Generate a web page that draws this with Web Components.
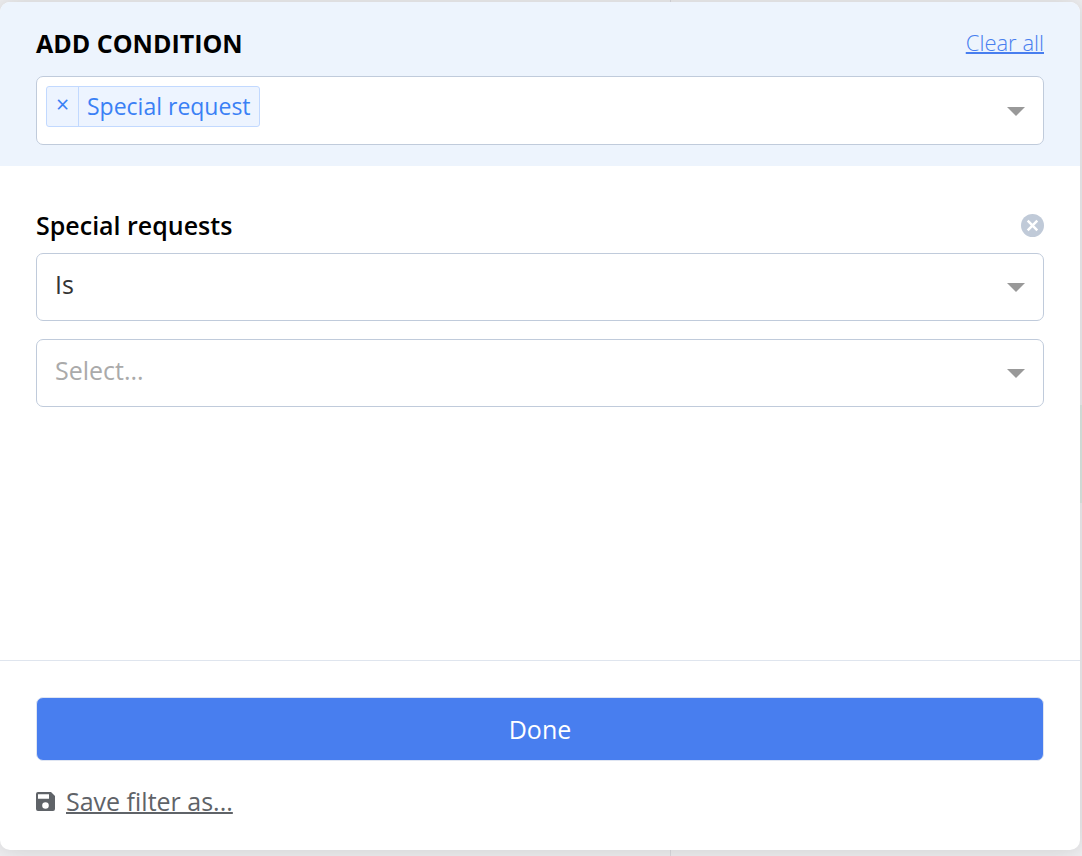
<!DOCTYPE html>
<html lang="en">
<head>
  <meta charset="utf-8">
  <meta name="viewport" content="width=device-width, initial-scale=1">
  <title>Add condition</title>
  <style>
    :root {
      --primary: #487eef;
      --header: #edf4fd;
      --border: #c0cbdb;
      --arrow: #999;
      --gray: #5f6368;
    }
    * {
      box-sizing: border-box;
    }
    body {
      margin: 0;
      min-height: 100vh;
      display: flex;
      padding: 2px 2px 6px 0;
      background:
        linear-gradient(#dcdce0, #dcdce0) 62% 0 / 1px 100% no-repeat,
        linear-gradient(#deebe5, #deebe5) 100% 405px / 2px 98px no-repeat,
        #f0f0f2;
      font-family: "Open Sans", "Noto Sans", sans-serif;
      font-size: 25px;
      line-height: 34px;
      color: #000;
    }
  </style>
</head>
<body>
  <filter-panel>
    <condition-header slot="header" heading="Add condition">
      <tag-picker label="Conditions">
        <filter-tag>Special request</filter-tag>
      </tag-picker>
    </condition-header>
    <condition-group heading="Special requests">
      <select-box label="Operator" value="Is"></select-box>
      <select-box label="Special request" placeholder="Select..."></select-box>
    </condition-group>
    <filter-actions slot="footer"></filter-actions>
  </filter-panel>

  <script>
    class FilterPanel extends HTMLElement {
      constructor() {
        super();
        this.attachShadow({ mode: "open" });
      }

      connectedCallback() {
        this.shadowRoot.innerHTML = `
          <style>
            :host {
              flex: 1;
              display: flex;
              flex-direction: column;
              border-radius: 10px;
              overflow: hidden;
              background: #fff;
              box-shadow: 0 0 24px rgba(0, 0, 0, 0.16);
            }
            main {
              flex: 1;
              padding: 42px 36px;
            }
          </style>
          <slot name="header"></slot>
          <main><slot></slot></main>
          <slot name="footer"></slot>
        `;
      }
    }

    class ConditionHeader extends HTMLElement {
      constructor() {
        super();
        this.attachShadow({ mode: "open" });
      }

      connectedCallback() {
        this.shadowRoot.innerHTML = `
          <style>
            :host {
              display: block;
              padding: 24px 36px 21px;
              background: var(--header);
            }
            .row {
              display: flex;
              justify-content: space-between;
              align-items: flex-start;
              margin-bottom: 16px;
            }
            h1 {
              margin: 0;
              font-size: 25px;
              font-weight: 700;
              text-transform: uppercase;
            }
            a {
              font-size: 22px;
              font-weight: 300;
              line-height: 32px;
              color: var(--primary);
              text-decoration-thickness: 2px;
            }
          </style>
          <div class="row">
            <h1>${this.getAttribute("heading")}</h1>
            <a href="#">Clear all</a>
          </div>
          <slot></slot>
        `;
      }
    }

    class TagPicker extends HTMLElement {
      constructor() {
        super();
        this.attachShadow({ mode: "open" });
      }

      connectedCallback() {
        this.shadowRoot.innerHTML = `
          <style>
            :host {
              box-sizing: border-box;
              display: flex;
              align-items: center;
              gap: 8px;
              padding: 9px 18px 17px 9px;
              border: 1px solid var(--border);
              border-radius: 7px;
              background: #fff;
            }
            input {
              flex: 1;
              min-width: 0;
              height: 34px;
              padding: 0;
              border: 0;
              outline: 0;
              background: none;
              font: inherit;
            }
            svg {
              display: block;
              width: 18px;
              height: 9px;
              fill: var(--arrow);
              align-self: end;
              margin-bottom: 11px;
            }
          </style>
          <slot></slot>
          <input type="text" role="combobox" aria-expanded="false" aria-label="${this.getAttribute("label")}">
          <svg viewBox="0 0 18 9" aria-hidden="true"><path d="M0 0h18L9 9z"/></svg>
        `;
      }
    }

    class FilterTag extends HTMLElement {
      constructor() {
        super();
        this.attachShadow({ mode: "open" });
      }

      connectedCallback() {
        this.shadowRoot.innerHTML = `
          <style>
            :host {
              display: flex;
              border: 1px solid #c2d9ff;
              border-radius: 3px;
              background: #edf4ff;
              color: #3a80f5;
              font-size: 23px;
              line-height: 39px;
            }
            button {
              width: 32px;
              padding: 0 0 4px;
              border: 0;
              border-right: 1px solid #c2d9ff;
              background: none;
              color: inherit;
              font: inherit;
              line-height: 35px;
              cursor: pointer;
            }
            span {
              padding: 0 8px;
            }
          </style>
          <button type="button" aria-label="Remove">×</button>
          <span><slot></slot></span>
        `;
        this.shadowRoot
          .querySelector("button")
          .addEventListener("click", () => this.remove());
      }
    }

    class ConditionGroup extends HTMLElement {
      constructor() {
        super();
        this.attachShadow({ mode: "open" });
      }

      connectedCallback() {
        this.shadowRoot.innerHTML = `
          <style>
            :host {
              display: block;
            }
            .row {
              display: flex;
              justify-content: space-between;
              align-items: center;
              margin-bottom: 11px;
            }
            h2 {
              margin: 0;
              font-size: 25px;
              font-weight: 600;
            }
            button {
              padding: 0;
              border: 0;
              background: none;
              cursor: pointer;
            }
            svg {
              display: block;
              width: 23px;
              height: 23px;
            }
            .fields {
              display: grid;
              gap: 18px;
            }
          </style>
          <div class="row">
            <h2>${this.getAttribute("heading")}</h2>
            <button type="button" aria-label="Remove condition">
              <svg viewBox="0 0 23 23">
                <circle cx="11.5" cy="11.5" r="11.5" fill="#c0cad8"/>
                <path d="M6.7 6.7l9.6 9.6M16.3 6.7l-9.6 9.6" stroke="#fff" stroke-width="2.5"/>
              </svg>
            </button>
          </div>
          <div class="fields"><slot></slot></div>
        `;
      }
    }

    class SelectBox extends HTMLElement {
      constructor() {
        super();
        this.attachShadow({ mode: "open" });
      }

      connectedCallback() {
        const value = this.getAttribute("value");
        this.shadowRoot.innerHTML = `
          <style>
            :host {
              display: grid;
              align-items: center;
            }
            select, svg {
              grid-area: 1 / 1;
            }
            select {
              appearance: none;
              box-sizing: border-box;
              width: 100%;
              height: 68px;
              padding: 0 48px 6px 18px;
              border: 1px solid var(--border);
              border-radius: 7px;
              background: #fff;
              color: #333;
              font: inherit;
            }
            select.empty {
              color: #aaa;
            }
            svg {
              display: block;
              justify-self: end;
              width: 18px;
              height: 9px;
              margin-right: 19px;
              fill: var(--arrow);
              pointer-events: none;
            }
          </style>
          <select class="${value ? "" : "empty"}" aria-label="${this.getAttribute("label")}">
            <option>${value || this.getAttribute("placeholder")}</option>
          </select>
          <svg viewBox="0 0 18 9" aria-hidden="true"><path d="M0 0h18L9 9z"/></svg>
        `;
      }
    }

    class FilterActions extends HTMLElement {
      constructor() {
        super();
        this.attachShadow({ mode: "open" });
      }

      connectedCallback() {
        this.shadowRoot.innerHTML = `
          <style>
            :host {
              display: block;
              padding: 36px 36px 32px;
              border-top: 1px solid #dfe5ee;
            }
            button {
              display: block;
              box-sizing: border-box;
              width: 100%;
              height: 64px;
              margin-bottom: 23px;
              border: 1px solid #dfe5f2;
              border-radius: 7px;
              background: var(--primary);
              color: #fff;
              font: inherit;
              cursor: pointer;
            }
            .save {
              display: flex;
              align-items: center;
              gap: 11px;
              color: var(--gray);
            }
            a {
              color: inherit;
              text-decoration-thickness: 2px;
            }
            svg {
              display: block;
              width: 19px;
              height: 19px;
              fill: currentColor;
            }
          </style>
          <button type="button">Done</button>
          <div class="save">
            <svg viewBox="0 0 19 19" aria-hidden="true">
              <path fill-rule="evenodd" d="M2 0h13l4 4v13a2 2 0 0 1-2 2H2a2 2 0 0 1-2-2V2a2 2 0 0 1 2-2zM2 2.2v4.600h11V2.200zM9.500 10.200a3.300 3.300 0 1 0 0 6.600a3.300 3.300 0 0 0 0-6.600z"/>
            </svg>
            <a href="#">Save filter as...</a>
          </div>
        `;
      }
    }

    customElements.define("filter-panel", FilterPanel);
    customElements.define("condition-header", ConditionHeader);
    customElements.define("tag-picker", TagPicker);
    customElements.define("filter-tag", FilterTag);
    customElements.define("condition-group", ConditionGroup);
    customElements.define("select-box", SelectBox);
    customElements.define("filter-actions", FilterActions);
  </script>
</body>
</html>
